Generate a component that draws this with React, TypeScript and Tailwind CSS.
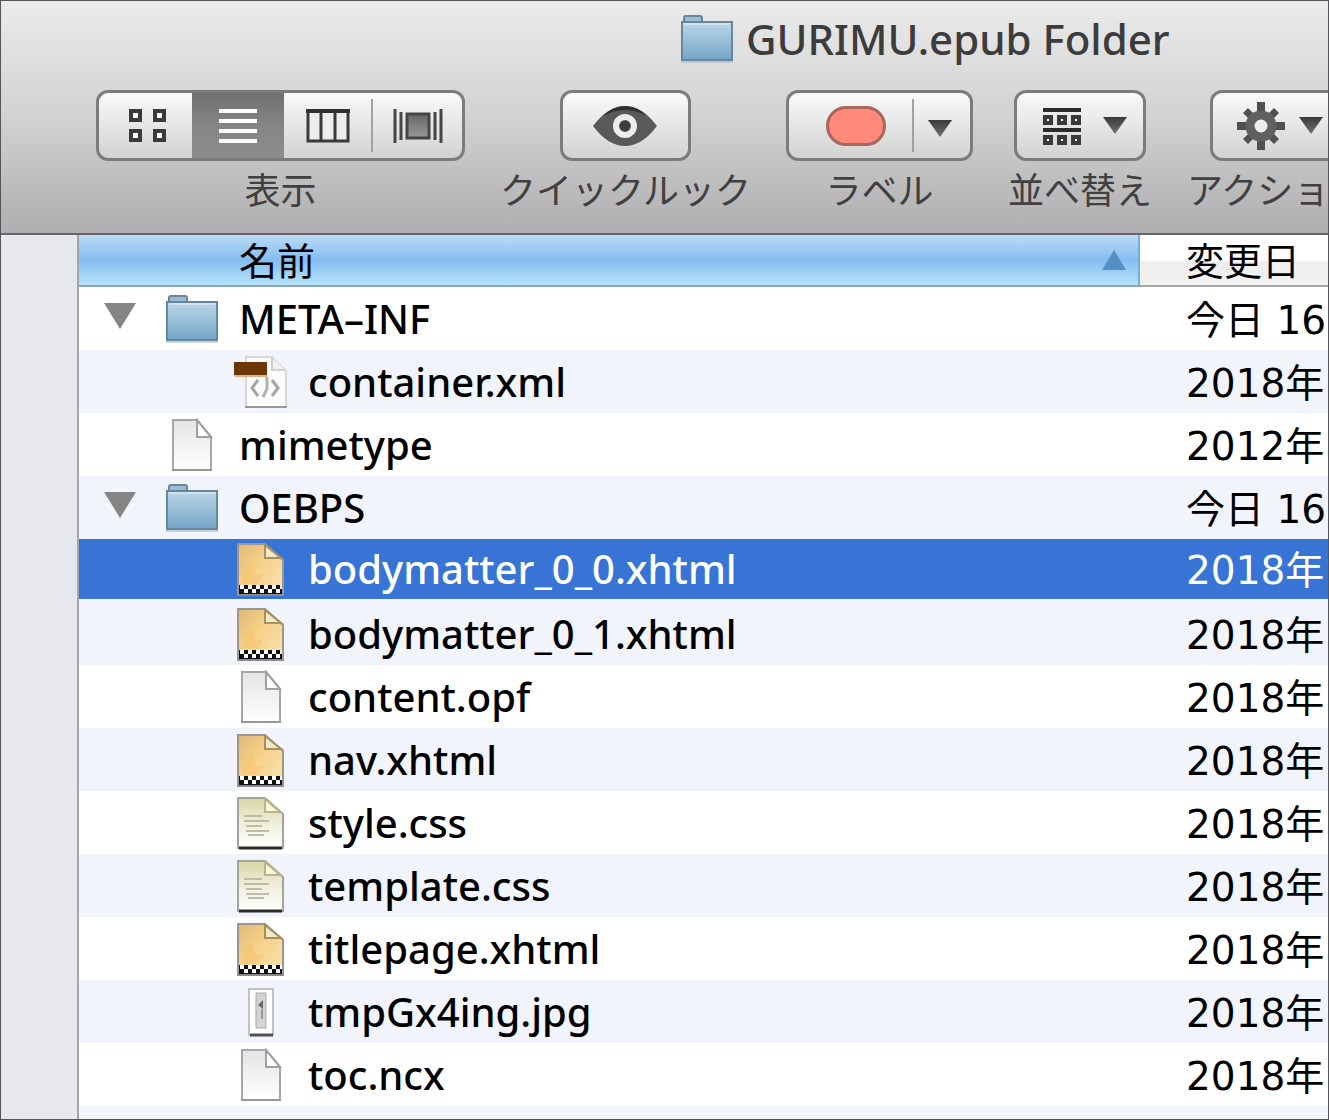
import React from "react";

type Kind = "folder" | "xml" | "doc" | "xhtml" | "css" | "jpg";
type Entry = { name: string; date: string; kind: Kind; child?: boolean; selected?: boolean };

const entries: Entry[] = [
  { name: "META–INF", date: "今日 16", kind: "folder" },
  { name: "container.xml", date: "2018年", kind: "xml", child: true },
  { name: "mimetype", date: "2012年", kind: "doc" },
  { name: "OEBPS", date: "今日 16", kind: "folder" },
  { name: "bodymatter_0_0.xhtml", date: "2018年", kind: "xhtml", child: true, selected: true },
  { name: "bodymatter_0_1.xhtml", date: "2018年", kind: "xhtml", child: true },
  { name: "content.opf", date: "2018年", kind: "doc", child: true },
  { name: "nav.xhtml", date: "2018年", kind: "xhtml", child: true },
  { name: "style.css", date: "2018年", kind: "css", child: true },
  { name: "template.css", date: "2018年", kind: "css", child: true },
  { name: "titlepage.xhtml", date: "2018年", kind: "xhtml", child: true },
  { name: "tmpGx4ing.jpg", date: "2018年", kind: "jpg", child: true },
  { name: "toc.ncx", date: "2018年", kind: "doc", child: true },
];

function Gradients() {
  return (
    <svg width="0" height="0" className="absolute" aria-hidden="true">
      <defs>
        <linearGradient id="folder" x1="0" y1="0" x2="0" y2="1">
          <stop offset="0" stopColor="#bcd6e8" />
          <stop offset="1" stopColor="#74a6c8" />
        </linearGradient>
        <linearGradient id="paper" x1="0" y1="0" x2="0" y2="1">
          <stop offset="0" stopColor="#e4e4e6" />
          <stop offset="1" stopColor="#ffffff" />
        </linearGradient>
        <linearGradient id="amber" x1="0" y1="0" x2="1" y2="1">
          <stop offset="0" stopColor="#dcb87a" />
          <stop offset="0.4" stopColor="#f6cf86" />
          <stop offset="1" stopColor="#f8e4b4" />
        </linearGradient>
        <linearGradient id="olive" x1="0" y1="0" x2="0" y2="1">
          <stop offset="0" stopColor="#d9d6a4" />
          <stop offset="0.5" stopColor="#efeedd" />
          <stop offset="1" stopColor="#ffffff" />
        </linearGradient>
        <linearGradient id="ink" x1="0" y1="0" x2="0" y2="1">
          <stop offset="0" stopColor="#3a3a3a" />
          <stop offset="1" stopColor="#707070" />
        </linearGradient>
        <linearGradient id="cover" x1="0" y1="0" x2="0" y2="1">
          <stop offset="0" stopColor="#666666" />
          <stop offset="1" stopColor="#999999" />
        </linearGradient>
      </defs>
    </svg>
  );
}

function FolderIcon() {
  return (
    <svg width="54" height="50" viewBox="0 0 54 50" className="shrink-0" aria-hidden="true">
      <path d="M4 8V4q0-2 2-2h14q2 0 2 2v4" fill="#9bbdd3" stroke="#68869c" strokeWidth="2" />
      <path d="M2 8h50v38H2z" fill="url(#folder)" stroke="#68869c" strokeWidth="2" />
      <path d="M4 10h46" stroke="#cfe2ee" strokeWidth="2" />
      <path d="M1 48h52" stroke="#a9b8c4" strokeWidth="2" opacity="0.6" />
    </svg>
  );
}

function DocIcon() {
  return (
    <svg width="54" height="54" viewBox="0 0 54 54" className="shrink-0" aria-hidden="true">
      <path d="M8 2h24l14 17v33H8z" fill="url(#paper)" stroke="#a6a6aa" strokeWidth="2" />
      <path d="M32 2l14 17H32z" fill="#ffffff" stroke="#a0a0a4" strokeWidth="2" />
      <path d="M7 52h40" stroke="#98989c" strokeWidth="2" />
    </svg>
  );
}

function XmlIcon() {
  return (
    <svg width="54" height="54" viewBox="0 0 54 54" className="shrink-0" aria-hidden="true">
      <path d="M12 2h26l14 14v36H12z" fill="#fbfbfb" stroke="#d8d8da" strokeWidth="2" />
      <path d="M38 2v13h13" fill="#f0f0f0" stroke="#cfcfd2" strokeWidth="2" />
      <path d="M11 52h42" stroke="#98989c" strokeWidth="2" />
      <path d="M24 25l-6 8 6 8M38 25l6 8-6 8" fill="none" stroke="#a5a5a8" strokeWidth="3" />
      <path d="M33 22v12l-4 8" fill="none" stroke="#b4b0aa" strokeWidth="3" />
      <path d="M0 7h33v13H0z" fill="#6d3606" />
      <path d="M1 21h32" stroke="#d8b08c" strokeWidth="2" />
    </svg>
  );
}

function XhtmlIcon() {
  return (
    <svg width="54" height="54" viewBox="0 0 54 54" className="shrink-0" aria-hidden="true">
      <path d="M4 2h27l18 16v35H4z" fill="url(#amber)" stroke="#9b9692" strokeWidth="2" />
      <path d="M12 25q8-8 8 2t10 4l-6 11H8z" fill="#f5c169" opacity="0.45" />
      <path d="M31 3v13h16z" fill="#f2e8ca" stroke="#a7905c" strokeWidth="2" />
      <path d="M5 43h43v9H5z" fill="#111111" />
      <path d="M6 45h42" stroke="#ffffff" strokeWidth="4" strokeDasharray="4 4" />
      <path d="M10 49h38" stroke="#ffffff" strokeWidth="4" strokeDasharray="4 4" />
      <path d="M4 53h45" stroke="#8a8a8c" strokeWidth="2" />
    </svg>
  );
}

function CssIcon() {
  return (
    <svg width="54" height="54" viewBox="0 0 54 54" className="shrink-0" aria-hidden="true">
      <path d="M4 2h27l18 16v34H4z" fill="url(#olive)" stroke="#a4a49c" strokeWidth="2" />
      <path d="M31 3v13h15z" fill="#fbf8d8" stroke="#b8b48c" strokeWidth="2" />
      <path d="M10 20h18M10 25h25M12 30h16M12 35h23M14 39h16" stroke="#bdbda4" strokeWidth="2" />
      <path d="M5 52h43" stroke="#2b2b2b" strokeWidth="3" />
    </svg>
  );
}

function JpgIcon() {
  return (
    <svg width="54" height="54" viewBox="0 0 54 54" className="shrink-0" aria-hidden="true">
      <path d="M15 4h24v46H15z" fill="#ffffff" stroke="#c2c2c6" strokeWidth="2" />
      <path d="M22 8h10v35H22z" fill="#d4d4d6" stroke="#a9a9ac" strokeWidth="1" />
      <path d="M29 15v9l-5-4z" fill="#66666a" />
      <path d="M28 24v10" stroke="#98989c" strokeWidth="2" />
      <path d="M16 50h23" stroke="#505054" strokeWidth="3" />
    </svg>
  );
}

const icons: Record<Kind, () => React.JSX.Element> = {
  folder: FolderIcon,
  xml: XmlIcon,
  doc: DocIcon,
  xhtml: XhtmlIcon,
  css: CssIcon,
  jpg: JpgIcon,
};

function Triangle() {
  return (
    <svg width="24" height="17" viewBox="0 0 24 17" aria-hidden="true">
      <path d="M0 0h24L12 17z" fill="url(#ink)" />
    </svg>
  );
}

function GridIcon() {
  return (
    <svg width="38" height="34" viewBox="0 0 38 34" aria-hidden="true">
      <path d="M2 2h9v9H2zM26 2h9v9h-9zM2 22h9v9H2zM26 22h9v9h-9z" fill="#ffffff" stroke="#3a3a3a" strokeWidth="4" />
    </svg>
  );
}

function ListIcon() {
  return (
    <svg width="38" height="36" viewBox="0 0 38 36" aria-hidden="true">
      <path d="M0 3h38M0 13h38M0 23h38M0 33h38" stroke="#ffffff" strokeWidth="4" />
    </svg>
  );
}

function ColumnsIcon() {
  return (
    <svg width="44" height="34" viewBox="0 0 44 34" aria-hidden="true">
      <path d="M2 2h40v30H2zM15 2v30M29 2v30" fill="#ededed" stroke="#3a3a3a" strokeWidth="3" />
      <path d="M0 2h44" stroke="#303030" strokeWidth="4" />
    </svg>
  );
}

function CoverIcon() {
  return (
    <svg width="50" height="34" viewBox="0 0 50 34" aria-hidden="true">
      <path d="M2 0v34M48 0v34" stroke="#454545" strokeWidth="3" />
      <path d="M8 3v28M42 3v28" stroke="#454545" strokeWidth="3" />
      <path d="M14 5h22v24H14z" fill="url(#cover)" stroke="#454545" strokeWidth="3" />
    </svg>
  );
}

function EyeIcon() {
  return (
    <svg width="64" height="40" viewBox="0 0 64 40" aria-hidden="true">
      <path d="M0 20Q15 0 32 0t32 20Q49 40 32 40T0 20z" fill="#595959" />
      <path d="M10 10Q20 0 32 0t22 10Q43 4 32 4T10 10z" fill="#303030" />
      <circle cx="32" cy="20" r="9" fill="#595959" stroke="#ededed" strokeWidth="6" />
      <circle cx="32" cy="20" r="5" fill="#3c3c3c" />
    </svg>
  );
}

function ArrangeIcon() {
  return (
    <svg width="38" height="40" viewBox="0 0 38 40" aria-hidden="true">
      <path d="M0 2h38M0 22h38" stroke="#2c2c2c" strokeWidth="4" />
      <path
        d="M2 9h6v6H2zM16 9h6v6h-6zM30 9h6v6h-6zM2 29h6v6H2zM16 29h6v6h-6zM30 29h6v6h-6z"
        fill="#ffffff"
        stroke="#3a3a3a"
        strokeWidth="4"
      />
    </svg>
  );
}

function GearIcon() {
  return (
    <svg width="48" height="48" viewBox="0 0 48 48" aria-hidden="true">
      <g fill="#505050">
        <path d="M20 0h8v10h-8zM20 38h8v10h-8zM0 20h10v8H0zM38 20h10v8H38z" />
        <path d="M6 11l5-5 8 8-5 5zM42 11l-5-5-8 8 5 5zM6 37l5 5 8-8-5-5zM42 37l-5 5-8-8 5-5z" />
      </g>
      <circle cx="24" cy="24" r="11" fill="#eeeeee" stroke="#606060" strokeWidth="9" />
    </svg>
  );
}

function ToolItem({ label, children }: { label: string; children: React.ReactNode }) {
  return (
    <div className="flex shrink-0 flex-col items-center gap-1">
      {children}
      <span className="text-[36px] leading-[52px] whitespace-nowrap text-[#404040]">{label}</span>
    </div>
  );
}

const shell =
  "flex h-[71px] items-stretch overflow-hidden rounded-xl border-[3px] border-[#7c7c7c] bg-linear-to-b from-[#fafafa] to-[#d2d2d2]";

export default function App() {
  return (
    <div className="flex min-h-screen flex-col overflow-hidden border border-[#55555a] bg-white font-['Noto_Sans','Noto_Sans_CJK_JP',sans-serif]">
      <Gradients />
      <header className="overflow-hidden border-b-2 border-[#66666a] bg-linear-to-b from-[#ebebeb] via-[#d2d2d2] to-[#b0aeb0]">
        <h1 className="ml-[679px] flex h-[75px] items-center gap-3 text-[42px] font-medium whitespace-nowrap text-[#3c3c3c]">
          <FolderIcon />
          GURIMU.epub Folder
        </h1>
        <div className="ml-[95px] flex gap-[35px] pt-[14px] pb-4">
          <ToolItem label="表示">
            <div className={`${shell} w-[369px]`} role="group" aria-label="表示">
              <button aria-label="アイコン" className="flex w-[93px] items-center justify-center pl-1">
                <GridIcon />
              </button>
              <button
                aria-label="リスト"
                aria-pressed="true"
                className="flex w-[92px] items-center justify-center bg-linear-to-b from-[#707070] via-[#858585] to-[#8c8c8c]"
              >
                <ListIcon />
              </button>
              <button aria-label="カラム" className="flex w-[87px] items-center justify-center">
                <ColumnsIcon />
              </button>
              <span className="my-1.5 w-0.5 bg-[#a2a2a2]" />
              <button aria-label="Cover Flow" className="flex flex-1 items-center justify-center">
                <CoverIcon />
              </button>
            </div>
          </ToolItem>
          <ToolItem label="クイックルック">
            <button aria-label="クイックルック" className={`${shell} w-[131px] justify-center`}>
              <span className="flex items-center">
                <EyeIcon />
              </span>
            </button>
          </ToolItem>
          <ToolItem label="ラベル">
            <div className={`${shell} w-[187px]`}>
              <button aria-label="ラベル" className="flex flex-1 items-center justify-center pl-3">
                <span className="h-10 w-[60px] rounded-[20px] border-[3px] border-[#a8665e] bg-[#ff8a7c]" />
              </button>
              <span className="my-1.5 w-0.5 bg-[#a2a2a2]" />
              <button aria-label="ラベルを選択" className="flex w-[56px] items-center justify-center pt-1.5 pr-1">
                <Triangle />
              </button>
            </div>
          </ToolItem>
          <ToolItem label="並べ替え">
            <button aria-label="並べ替え" className={`${shell} w-[132px] justify-between pr-4 pl-[26px]`}>
              <span className="flex items-center pt-1">
                <ArrangeIcon />
              </span>
              <span className="flex items-center">
                <Triangle />
              </span>
            </button>
          </ToolItem>
          <ToolItem label="アクション">
            <button aria-label="アクション" className={`${shell} w-[132px] justify-between pr-4 pl-6`}>
              <span className="flex items-center">
                <GearIcon />
              </span>
              <span className="flex items-center">
                <Triangle />
              </span>
            </button>
          </ToolItem>
        </div>
      </header>
      <div className="flex flex-1">
        <aside className="w-[78px] shrink-0 border-r-2 border-[#a4a4ac] bg-[#e7e7ee]" />
        <main className="flex min-w-0 flex-1 flex-col">
          <table className="w-full table-fixed border-separate border-spacing-0 text-left">
            <colgroup>
              <col />
              <col className="w-[188px]" />
            </colgroup>
            <thead>
              <tr className="h-[52px] text-[38px] leading-[48px]">
                <th
                  aria-sort="ascending"
                  className="border-r-2 border-b-2 border-r-[#6fb0e4] border-b-[#8ba6bc] bg-linear-to-b from-[#bcdcf6] via-[#84bdf0] to-[#b8e4fc] p-0 font-normal"
                >
                  <div className="flex items-center justify-between pr-3 pl-[160px]">
                    名前
                    <svg width="24" height="20" viewBox="0 0 24 20" aria-hidden="true">
                      <path d="M12 0l12 20H0z" fill="#5490c4" />
                    </svg>
                  </div>
                </th>
                <th className="overflow-hidden border-b-2 border-[#a8a8a8] bg-linear-to-b from-white from-50% via-[#eeeeee] via-55% to-[#f2f2f2] p-0 pl-[46px] font-normal whitespace-nowrap">
                  変更日
                </th>
              </tr>
            </thead>
            <tbody>
              {entries.map((e, i) => {
                const Icon = icons[e.kind];
                const tone = e.selected
                  ? "bg-[#3873d6] text-white"
                  : i % 2
                    ? "bg-[#f1f4fa] text-black"
                    : "bg-white text-black";
                const edge = e.selected ? "border-b-[3px] border-[#f1f4fa]" : "";
                return (
                  <tr
                    key={e.name}
                    className={`h-[63px] text-[40px] leading-[56px] ${tone}`}
                    aria-selected={!!e.selected}
                  >
                    <td className={`p-0 font-medium ${edge}`}>
                      <div className={`flex items-center gap-5 ${e.child ? "pl-[155px]" : "pl-[25px]"}`}>
                        {!e.child && (
                          <span className="flex w-[41px] shrink-0 pb-1.5">
                            {e.kind === "folder" && (
                              <button aria-label={`${e.name} を閉じる`}>
                                <svg width="32" height="26" viewBox="0 0 32 26" aria-hidden="true">
                                  <path d="M0 0h32L16 26z" fill="#858585" />
                                </svg>
                              </button>
                            )}
                          </span>
                        )}
                        <Icon />
                        <span className="whitespace-nowrap">{e.name}</span>
                      </div>
                    </td>
                    <td
                      className={`overflow-hidden p-0 pt-1 pl-[46px] font-['DejaVu_Sans','Noto_Sans_CJK_JP',sans-serif] text-[39px] whitespace-nowrap ${edge}`}
                    >
                      {e.date}
                    </td>
                  </tr>
                );
              })}
            </tbody>
          </table>
          <div className="flex-1 bg-[#f1f4fa]" />
        </main>
      </div>
    </div>
  );
}
